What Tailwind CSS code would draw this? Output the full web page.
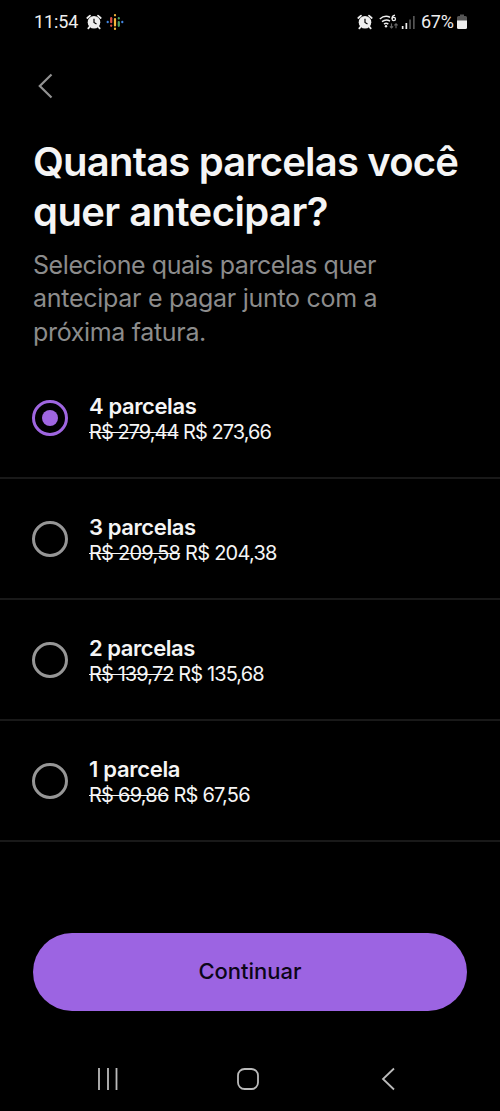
<!DOCTYPE html>
<html lang="pt-BR">
<head>
<meta charset="utf-8">
<meta name="viewport" content="width=device-width, initial-scale=1">
<title>Antecipar parcelas</title>
<script src="https://cdn.jsdelivr.net/npm/@tailwindcss/browser@4"></script>
</head>
<body class="bg-black">
<div class="flex h-[1111px] w-[500px] flex-col overflow-hidden bg-black font-['Inter',sans-serif] text-[#f5f5f5]">
  <header class="flex h-11 items-center justify-between pl-[34px] pr-[33px] font-['Roboto',sans-serif] text-[18px] text-[#eee]">
    <div class="flex items-center">
      <span class="w-[52px] -translate-y-px whitespace-nowrap tracking-[-0.1px]">11:54</span>
      <svg class="h-4 w-4" viewBox="0 0 16 16" fill="none" stroke="#eee"><circle cx="8" cy="8.3" r="6.3" fill="#eee" stroke="none"/><path d="M1.3 4 4 1.6M14.7 4 12 1.6M3.8 12.5 2.3 14.4M12.2 12.5l1.5 1.9" stroke-width="1.8" stroke-linecap="round"/><path d="M8 4.8v3.7l2.5 1.4" stroke="#000" stroke-width="1.2"/></svg>
      <svg class="ml-[4px] h-[18px] w-[18px]" viewBox="0 0 18 18" fill="none" stroke-width="2.2" stroke-linecap="round"><path d="M9 2v.3M9 6v6.5M9 15.7v.3" stroke="#f3b73b"/><path d="M5.2 5.2v4" stroke="#de5145"/><path d="M5.2 12.5v.3" stroke="#de5145"/><path d="M12.8 5.2v.3M12.8 9v3.8" stroke="#4aa264"/><path d="M1.7 8.8v.4M16.3 8.8v.4" stroke="#4285e0"/></svg>
    </div>
    <div class="flex items-center">
      <svg class="mr-0.5 h-4 w-4" viewBox="0 0 16 16" fill="none" stroke="#eee"><circle cx="8" cy="8.3" r="6.3" fill="#eee" stroke="none"/><path d="M1.3 4 4 1.6M14.7 4 12 1.6M3.8 12.5 2.3 14.4M12.2 12.5l1.5 1.9" stroke-width="1.8" stroke-linecap="round"/><path d="M8 4.8v3.7l2.5 1.4" stroke="#000" stroke-width="1.2"/></svg>
      <svg class="ml-[4px] h-[18px] w-[20px]" viewBox="0 0 20 18" fill="none" stroke="#eee"><path d="M.8 6Q5.500 1.800 11 4.200M3 8.700q4-3.200 8-.6M5 11.200q2.200-1.700 4.300 0" stroke-width="1.500"/><circle cx="7" cy="13.300" r="1.200" fill="#eee" stroke="none"/><path d="M16 2.200q-3 .5-3 3.600" stroke-width="1.300"/><circle cx="14.800" cy="6" r="1.700" stroke-width="1.300"/><path d="M12.500 10.500v4.500m-1.600-1.600 1.600 1.600 1.600-1.600M17 15.300v-4.500m-1.600 1.600 1.600-1.600 1.600 1.600" stroke="#666" stroke-width="1.200"/></svg>
      <svg class="ml-[2px] h-[14px] w-[14px]" viewBox="0 0 14 14"><path d="M.8 11h1.700v3H.8zM4.500 8h1.700v6H4.500z" fill="#eee"/><path d="M8.200 4.500h1.700V14H8.200zM12 1h1.700v13H12z" fill="#555"/></svg>
      <span class="ml-[6px] w-[36px] -translate-y-px whitespace-nowrap text-[18px] tracking-[-0.3px]">67%</span>
      <svg class="h-[16px] w-[10px]" viewBox="0 0 10 16"><path d="M3 .5h4V2h1.500Q10 2 10 3.500V7H0V3.500Q0 2 1.500 2H3z" fill="#555"/><path d="M0 6.500h10v7Q10 15 8.500 15h-7Q0 15 0 13.500z" fill="#eee"/></svg>
    </div>
  </header>

  <nav class="flex h-[93px] items-start pl-[38px] pt-[29px]">
    <button aria-label="Voltar"><svg class="block h-[26px] w-4" viewBox="0 0 16 26" fill="none" stroke="#929292" stroke-width="2.200"><path d="M13.500 1.500 1.800 13l11.700 11.500"/></svg></button>
  </nav>

  <section class="h-[236px] whitespace-nowrap pl-[33px]">
    <h1 class="text-[40px] font-semibold leading-[50px]">
      <span class="block tracking-[-0.8px]">Quantas parcelas você</span>
      <span class="block tracking-[-0.58px]">quer antecipar?</span>
    </h1>
    <p class="mt-[12px] text-[25px] leading-[33.300px] text-[#8c8c8c]">
      <span class="block tracking-[-0.42px]">Selecione quais parcelas quer</span>
      <span class="block tracking-[-0.28px]">antecipar e pagar junto com a</span>
      <span class="block tracking-[-0.33px]">próxima fatura.</span>
    </p>
  </section>

  <main class="whitespace-nowrap">
    <label class="flex h-[106px] border-b-2 border-[#191919] pl-8 pt-[20px]">
      <span class="mt-[7px] flex size-9 shrink-0 items-center justify-center rounded-full border-[3px] border-[#9f66e0]"><span class="size-4 rounded-full bg-[#9f66e0]"></span></span>
      <span class="ml-[21px]"><span class="block text-[22px] font-semibold leading-[26px] tracking-[-0.4px]">4 parcelas</span><span class="block text-[20px] leading-[26px] tracking-[-0.97px]"><s class="decoration-1">R$ 279,44</s> R$ 273,66</span></span>
    </label>
    <label class="flex h-[121px] border-b-2 border-[#191919] pl-8 pt-[35px]">
      <span class="mt-[7px] size-9 shrink-0 rounded-full border-[3px] border-[#969696]"></span>
      <span class="ml-[21px]"><span class="block text-[22px] font-semibold leading-[26px] tracking-[-0.4px]">3 parcelas</span><span class="block text-[20px] leading-[26px] tracking-[-0.76px]"><s class="decoration-1">R$ 209,58</s> R$ 204,38</span></span>
    </label>
    <label class="flex h-[121px] border-b-2 border-[#191919] pl-8 pt-[35px]">
      <span class="mt-[7px] size-9 shrink-0 rounded-full border-[3px] border-[#969696]"></span>
      <span class="ml-[21px]"><span class="block text-[22px] font-semibold leading-[26px] tracking-[-0.45px]">2 parcelas</span><span class="block text-[20px] leading-[26px] tracking-[-0.9px]"><s class="decoration-1">R$ 139,72</s> R$ 135,68</span></span>
    </label>
    <label class="flex h-[121px] border-b-2 border-[#191919] pl-8 pt-[35px]">
      <span class="mt-[7px] size-9 shrink-0 rounded-full border-[3px] border-[#969696]"></span>
      <span class="ml-[21px]"><span class="block text-[22px] font-semibold leading-[26px] tracking-[-0.3px]">1 parcela</span><span class="block text-[20px] leading-[26px] tracking-[-0.77px]"><s class="decoration-1">R$ 69,86</s> R$ 67,56</span></span>
    </label>
  </main>

  <button class="mx-[33px] mt-[91px] flex h-[78px] shrink-0 items-center justify-center rounded-full bg-[#9c64e2] pb-0.5 text-[22px] font-medium text-[#0c0618]">Continuar</button>

  <footer class="mt-[56px] flex items-center pl-[97px]">
    <svg class="h-[22px] w-[22px]" viewBox="0 0 22 22" stroke="#bbb" stroke-width="1.800"><path d="M2 0v22M11 0v22M19.500 0v22"/></svg>
    <svg class="ml-[117px] h-[24px] w-[24px]" viewBox="0 0 24 24" fill="none" stroke="#bbb" stroke-width="1.800"><rect x="2" y="2" width="20" height="20" rx="6.500"/></svg>
    <svg class="ml-[121px] h-[24px] w-[15px]" viewBox="0 0 15 24" fill="none" stroke="#bbb" stroke-width="1.800"><path d="M13 1.500 2 12l11 10.500"/></svg>
  </footer>
</div>
</body>
</html>
